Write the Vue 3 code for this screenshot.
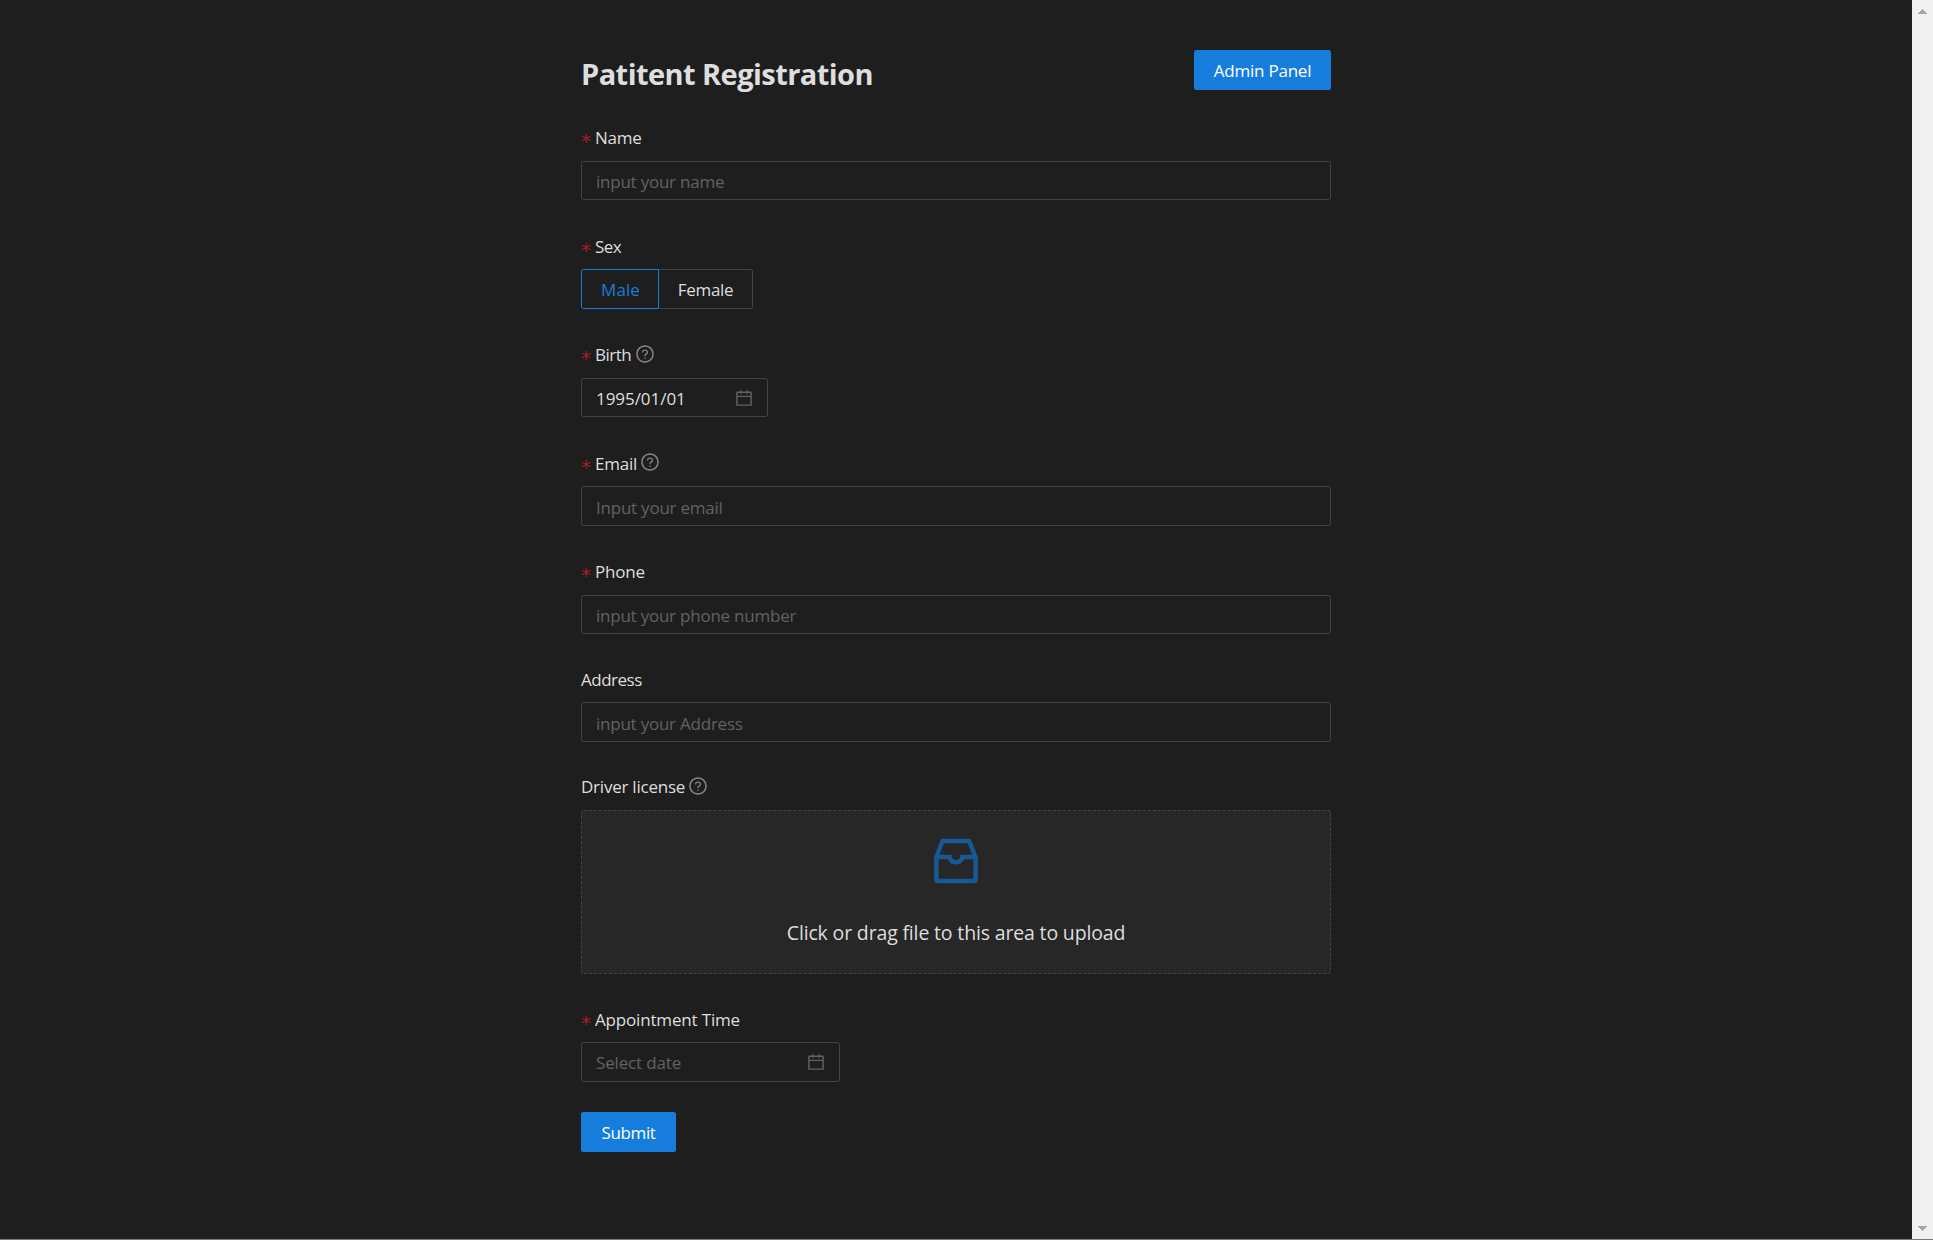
<script setup>
import { h, ref } from 'vue'

const sex = ref('Male')

const icon = (paths) => () =>
  h('svg', { viewBox: '0 0 1024 1024', fill: 'currentColor', 'aria-hidden': 'true' }, paths.map((d) => h('path', { d })))

const QuestionIcon = icon([
  'M512 64C264.6 64 64 264.6 64 512s200.6 448 448 448 448-200.6 448-448S759.4 64 512 64zm0 820c-205.4 0-372-166.6-372-372s166.6-372 372-372 372 166.6 372 372-166.6 372-372 372z',
  'M623.6 316.7C593.6 290.4 554 276 512 276s-81.6 14.5-111.6 40.7C369.2 344 352 380.7 352 420v7.6c0 4.4 3.6 8 8 8h48c4.4 0 8-3.6 8-8V420c0-44.1 43.1-80 96-80s96 35.9 96 80c0 31.1-22 59.6-56.1 72.7-21.2 8.1-39.2 22.3-52.1 40.9-13.1 19-19.9 41.8-19.9 64.9V620c0 4.4 3.6 8 8 8h48c4.4 0 8-3.6 8-8v-22.7a48.3 48.3 0 0130.9-44.8c59-22.7 97.1-74.7 97.1-132.5.1-39.3-17.1-76-48.3-103.3zM472 732a40 40 0 1080 0 40 40 0 10-80 0z',
])
const CalendarIcon = icon([
  'M880 184H712v-64c0-4.4-3.6-8-8-8h-56c-4.4 0-8 3.6-8 8v64H384v-64c0-4.4-3.6-8-8-8h-56c-4.4 0-8 3.6-8 8v64H144c-17.7 0-32 14.3-32 32v664c0 17.7 14.3 32 32 32h736c17.7 0 32-14.3 32-32V216c0-17.7-14.3-32-32-32zm-40 656H184V460h656v380zM184 392V256h128v48c0 4.4 3.6 8 8 8h56c4.4 0 8-3.6 8-8v-48h256v48c0 4.4 3.6 8 8 8h56c4.4 0 8-3.6 8-8v-48h128v136H184z',
])
const InboxIcon = icon([
  'M885.2 446.3l-.2-.8-112.2-285.1c-5-16.1-19.9-27.2-36.8-27.2H281.2c-17 0-32.1 11.3-36.9 27.6L139.4 443l-.3.7-.2.8c-1.3 4.9-1.7 9.9-1 14.8-.1 1.6-.2 3.2-.2 4.8V830a60.9 60.9 0 0060.8 60.8h627.2c33.5 0 60.8-27.3 60.9-60.8V464.1c0-1.3 0-2.6-.1-3.7.4-4.9 0-9.6-1.3-14.1zm-295.8-43l-.3 15.7c-.8 44.9-31.8 75.1-77.1 75.1-22.1 0-41.1-7.1-54.8-20.6S436 441.2 435.6 419l-.3-15.7H229.5L309 210h399.2l81.7 193.3H589.4zm-375 76.8h157.3c24.3 57.1 76 90.8 140.4 90.8 33.7 0 65-9.4 90.3-27.2 22.2-15.6 39.5-37.4 50.7-63.6h156.5V814H214.4V480.1z',
])
</script>

<template>
  <div class="window">
    <main class="page">
      <form class="form" @submit.prevent>
        <header class="header">
          <h1 class="title">Patitent Registration</h1>
          <button type="button" class="btn">Admin Panel</button>
        </header>

        <label class="label required"><span>Name</span></label>
        <input class="input short" placeholder="input your name" />

        <label class="label required low"><span class="snug">Sex</span></label>
        <div class="radios">
          <button
            v-for="s in ['Male', 'Female']"
            :key="s"
            type="button"
            class="radio"
            :class="[s.toLowerCase(), { active: sex === s }]"
            @click="sex = s"
          >{{ s }}</button>
        </div>

        <label class="label required"><span class="snug">Birth</span><QuestionIcon class="hint" /></label>
        <div class="picker short birth">
          <span class="date">1995/01/01</span>
          <CalendarIcon class="calendar" />
        </div>

        <label class="label required low"><span>Email</span><QuestionIcon class="hint near" /></label>
        <input class="input" placeholder="Input your email" />

        <label class="label required"><span>Phone</span></label>
        <input class="input short" placeholder="input your phone number" />

        <label class="label optional low"><span class="snug">Address</span></label>
        <input class="input" placeholder="input your Address" />

        <label class="label optional"><span>Driver license</span><QuestionIcon class="hint near" /></label>
        <div class="upload">
          <InboxIcon class="inbox" />
          <p class="upload-text">Click or drag file to this area to upload</p>
        </div>

        <label class="label required optional low"><span class="wide">Appointment Time</span></label>
        <div class="picker appointment">
          <span class="empty">Select date</span>
          <CalendarIcon class="calendar" />
        </div>

        <button type="submit" class="btn submit">Submit</button>
      </form>
    </main>
    <aside class="scrollbar">
      <svg viewBox="0 0 9 5"><path d="M4 0h1v1h1v1h1v1h1v1h1v1H0V4h1V3h1V2h1V1h1z" /></svg>
      <svg viewBox="0 0 9 5"><path d="M0 0h9v1H8v1H7v1H6v1H5v1H4V4H3V3H2V2H1V1H0z" /></svg>
    </aside>
  </div>
</template>

<style>
body { background: #1e1e1e; }
</style>

<style scoped>
* { box-sizing: border-box; }
.window {
  display: flex;
  height: 1240px;
  background: #1e1e1e;
  border-bottom: 1px solid #7a7a7a;
  color: #dedede;
  font: 17px/28px "Open Sans", "Noto Sans", sans-serif;
  letter-spacing: -0.23px;
  overflow: hidden;
}
.page { flex: 1; display: flex; justify-content: center; padding-top: 50px; }
.form { width: 750px; display: flex; flex-direction: column; align-items: flex-start; }
.header { width: 100%; height: 42px; display: flex; justify-content: space-between; align-items: flex-start; }
.title { margin: 3px 0 0; font-size: 29px; line-height: 42px; font-weight: 700; letter-spacing: -0.56px; }
.btn, .radio, .input { font: inherit; letter-spacing: inherit; margin: 0; outline: none; }
.btn {
  width: 137px;
  height: 40px;
  padding: 1px 0 0;
  border: 0;
  border-radius: 2.5px;
  background: #177ddc;
  color: #fff;
}
.submit { width: 95px; margin-top: 30px; letter-spacing: -0.36px; }
.label { height: 69px; display: flex; align-items: flex-end; padding-bottom: 9px; }
.label.optional { height: 68px; }
.label.low { padding-bottom: 8px; }
.label .snug { letter-spacing: -0.5px; }
.label .wide { letter-spacing: -0.17px; }
.required::before {
  content: "*";
  width: 14px;
  height: 25px;
  color: #a61d24;
  font: 20px/28px "DejaVu Sans Mono", monospace;
  letter-spacing: 0;
  text-indent: -1px;
}
.hint { width: 20px; height: 20px; margin: 0 0 5px 4px; color: #868686; }
.hint.near { margin-left: 3px; }
.low .hint { margin-bottom: 6px; }
.input, .picker {
  width: 100%;
  height: 40px;
  padding: 2px 14px 0;
  border: 1px solid #434343;
  border-radius: 2.5px;
  background: transparent;
  color: #dedede;
}
.short { height: 39px; padding-top: 1px; }
.input::placeholder { color: #626262; opacity: 1; }
.picker { display: flex; justify-content: space-between; align-items: center; padding: 0 13px 0 14px; }
.birth { width: 187px; }
.appointment { width: 259px; }
.picker span { padding-top: 2px; }
.date { letter-spacing: -0.05px; }
.empty { color: #626262; letter-spacing: -0.15px; }
.calendar { width: 20px; height: 20px; color: #626262; }
.radios { display: flex; }
.radio {
  height: 40px;
  padding: 1px 0 0;
  border: 1px solid #434343;
  background: transparent;
  color: #dedede;
}
.male { width: 78px; padding-left: 1px; border-radius: 2.5px 0 0 2.5px; letter-spacing: 0.05px; }
.female { width: 94px; border-left: 0; border-radius: 0 2.5px 2.5px 0; letter-spacing: -0.3px; }
.radio.active { border-color: #177ddc; color: #177ddc; }
.upload {
  width: 100%;
  height: 164px;
  display: flex;
  flex-direction: column;
  align-items: center;
  padding-top: 20px;
  border: 1px dashed #434343;
  border-radius: 2.5px;
  background: #272727;
}
.inbox { width: 60px; height: 60px; color: #165996; }
.upload-text { margin: 26px 0 0; font-size: 19.5px; line-height: 32px; letter-spacing: -0.16px; }
.scrollbar {
  width: 21px;
  display: flex;
  flex-direction: column;
  align-items: center;
  justify-content: space-between;
  padding: 9px 0 8px;
  background: #f0f0f0;
}
.scrollbar svg { width: 9px; height: 5px; fill: #a3a3a3; shape-rendering: crispEdges; }
</style>
